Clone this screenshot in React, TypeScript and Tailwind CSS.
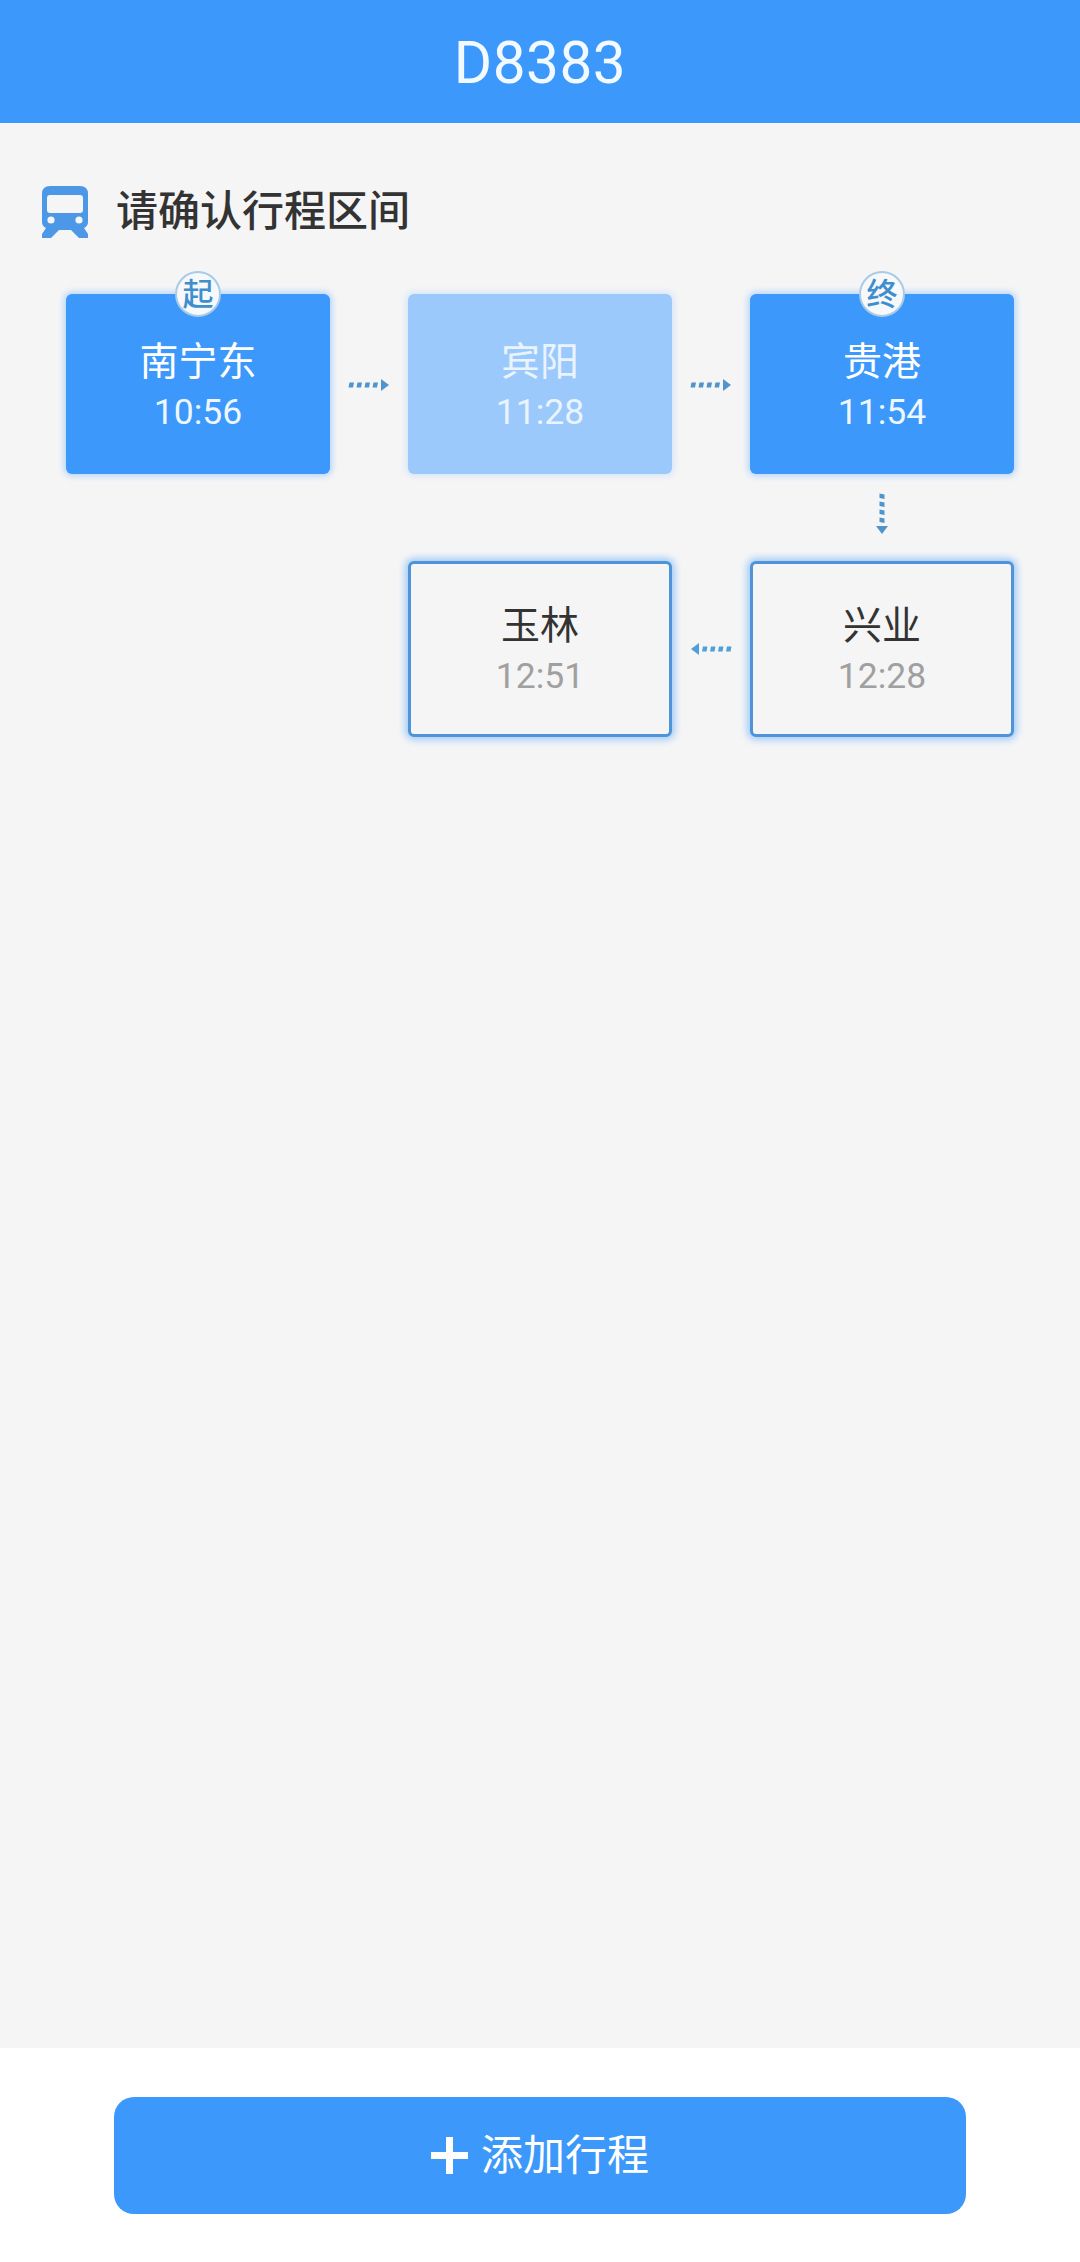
const CJK = "font-['Roboto','Noto_Sans_CJK_SC',sans-serif]";

function Arrow({ dir, color = "#4f94cc" }: { dir: "right" | "left" | "down"; color?: string }) {
  const rot = dir === "right" ? "translate-y-[1px]" : dir === "left" ? "rotate-180" : "rotate-90 -translate-y-[4px]";
  return (
    <svg width="42" height="14" viewBox="0 0 42 14" className={rot}>
      {[0, 8, 16, 24].map((x) => (
        <path key={x} d={`M${x + 1.5} 4.5 h4.5 l-1 5 h-4.5 z`} fill={color} />
      ))}
      <path d="M33 1 L41 7 L33 13 Z" fill={color} />
    </svg>
  );
}

function Station({
  name,
  time,
  variant,
  badge,
}: {
  name: string;
  time: string;
  variant: "solid" | "pale" | "outline";
  badge?: string;
}) {
  const box =
    variant === "solid"
      ? "bg-[#3d98fb] shadow-[0_0_6px_2px_rgba(61,152,251,0.35)] h-[180px] pt-[6px]"
      : variant === "pale"
        ? "bg-[#9cc9fb] shadow-[0_0_6px_2px_rgba(156,201,251,0.35)] h-[180px] pt-[6px]"
        : "bg-[#f5f5f6] border-[3px] border-[#4f94d8] shadow-[0_0_7px_3px_rgba(61,152,251,0.45)] h-[176px] pt-[4px]";
  const nameColor = variant === "outline" ? "text-[#333333]" : variant === "pale" ? "text-[#eaf4ff]" : "text-white";
  const timeColor = variant === "outline" ? "text-[#a0a0a0]" : variant === "pale" ? "text-[#eaf4ff]" : "text-[#eef7ff]";
  return (
    <div className={`relative flex flex-col items-center justify-center rounded-[6px] ${box}`}>
      {badge && (
        <div className="absolute left-1/2 top-[-23px] flex h-[46px] w-[46px] -translate-x-1/2 items-center justify-center rounded-full border-[2px] border-[#a9cbe6] bg-[#f6f8fa] text-[31px] font-medium leading-none text-[#3f8fce]">
          {badge}
        </div>
      )}
      <div className={`text-[39px] leading-[50px] ${nameColor}`}>{name}</div>
      <div className={`text-[35.5px] leading-[50px] ${timeColor}`}>{time}</div>
    </div>
  );
}

function TrainIcon() {
  return (
    <svg width="46" height="52" viewBox="0 0 46 52">
      <path
        d="M8 0 H38 Q46 0 46 8 V36 Q46 40 42 42 L46 48 V52 H37 L29 44 H17 L9 52 H0 V48 L4 42 Q0 40 0 36 V8 Q0 0 8 0 Z"
        fill="#4c98e6"
      />
      <rect x="5" y="9" width="36" height="18" rx="3" fill="#f5f5f6" />
      <circle cx="9" cy="34" r="3.6" fill="#f5f5f6" />
      <circle cx="37" cy="34" r="3.6" fill="#f5f5f6" />
    </svg>
  );
}

export default function App() {
  return (
    <div className={`flex h-[2262px] w-[1080px] flex-col bg-[#f5f5f6] ${CJK}`}>
      <header className="flex h-[123px] items-center justify-center bg-[#3d98fb] pt-[3px]">
        <h1 className="text-[58.5px] font-normal leading-none tracking-[0.5px] text-[#f2faff]">D8383</h1>
      </header>

      <main className="flex flex-1 flex-col">
        <div className="mt-[60px] flex h-[58px] items-center pl-[42px]">
          <TrainIcon />
          <span className="ml-[28px] text-[42px] font-medium leading-none text-[#333333]">请确认行程区间</span>
        </div>

        <div className="mt-[53px] grid grid-cols-[264px_78px_264px_78px_264px] grid-rows-[180px_87px_176px] pl-[66px]">
          <Station name="南宁东" time="10:56" variant="solid" badge="起" />
          <div className="flex items-center justify-center"><Arrow dir="right" /></div>
          <Station name="宾阳" time="11:28" variant="pale" />
          <div className="flex items-center justify-center"><Arrow dir="right" /></div>
          <Station name="贵港" time="11:54" variant="solid" badge="终" />

          <div className="col-start-5 flex items-center justify-center"><Arrow dir="down" /></div>

          <div className="col-start-3 row-start-3"><Station name="玉林" time="12:51" variant="outline" /></div>
          <div className="col-start-4 row-start-3 flex items-center justify-center"><Arrow dir="left" color="#4fa0d8" /></div>
          <div className="col-start-5 row-start-3"><Station name="兴业" time="12:28" variant="outline" /></div>
        </div>
      </main>

      <footer className="flex h-[214px] justify-center bg-white pt-[49px]">
        <button className="flex h-[117px] w-[852px] items-center justify-center rounded-[20px] bg-[#3d98fb] text-white">
          <svg width="37" height="37" viewBox="0 0 37 37" className="mr-[13px]">
            <path d="M15 0 h7 v15 h15 v7 h-15 v15 h-7 v-15 h-15 v-7 h15 z" fill="#ffffff" />
          </svg>
          <span className="text-[42px] leading-none">添加行程</span>
        </button>
      </footer>
    </div>
  );
}
